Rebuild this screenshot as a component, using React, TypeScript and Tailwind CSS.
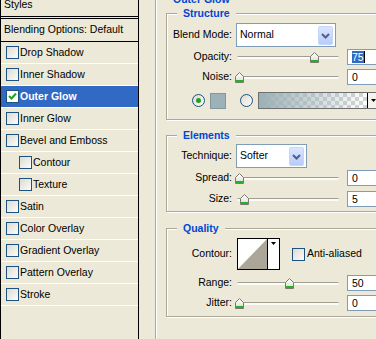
const LABEL = "w-[65px] shrink-0 text-right";

const styles = [
  { label: "Drop Shadow" },
  { label: "Inner Shadow" },
  { label: "Outer Glow", checked: true, selected: true },
  { label: "Inner Glow" },
  { label: "Bevel and Emboss" },
  { label: "Contour", indent: true },
  { label: "Texture", indent: true },
  { label: "Satin" },
  { label: "Color Overlay" },
  { label: "Gradient Overlay" },
  { label: "Pattern Overlay" },
  { label: "Stroke" },
];

function Check({ on = false, className = "" }: { on?: boolean; className?: string }) {
  return (
    <span
      className={`w-[13px] h-[13px] shrink-0 border border-[#1c5180] flex items-center justify-center ${
        on ? "bg-white" : "bg-[linear-gradient(135deg,#dcdad0,#fcfcfb)]"
      } ${className}`}
    >
      {on && (
        <svg width="9" height="9" viewBox="0 0 9 9">
          <path d="M1 4 L3.5 6.5 L8 1.5" fill="none" stroke="#21a121" strokeWidth="2" />
        </svg>
      )}
    </span>
  );
}

function Radio({ on = false }: { on?: boolean }) {
  return (
    <span className="w-[13px] h-[13px] shrink-0 rounded-full border border-[#1c5180] bg-[linear-gradient(135deg,#dcdad0,#fcfcfb)] flex items-center justify-center">
      {on && <span className="w-[5px] h-[5px] rounded-full bg-[#21a121]" />}
    </span>
  );
}

function Arrow() {
  return (
    <svg width="5" height="3" viewBox="0 0 5 3">
      <polygon points="0,0 5,0 2.5,3" fill="#000" />
    </svg>
  );
}

function Select({ value, width }: { value: string; width: string }) {
  return (
    <div className={`relative h-[24px] shrink-0 border border-[#7f9db9] bg-white flex items-center pl-[3px] ${width}`}>
      <span>{value}</span>
      <div className="absolute right-[2px] top-[2px] bottom-[1px] w-[15px] rounded-[2px] border border-[#c5d5fb] bg-[linear-gradient(#dbe5ff,#b8ccf9)] flex items-center justify-center">
        <svg width="9" height="6" viewBox="0 0 9 6">
          <path d="M1 1 L4.5 4.5 L8 1" fill="none" stroke="#4d6185" strokeWidth="2" />
        </svg>
      </div>
    </div>
  );
}

function Thumb({ x }: { x: number }) {
  return (
    <svg className="absolute top-[3px]" style={{ left: x }} width="9" height="11" viewBox="0 0 9 11">
      <defs>
        <linearGradient id="tg" x1="0" y1="0" x2="0" y2="1">
          <stop offset="0" stopColor="#ffffff" />
          <stop offset="1" stopColor="#dcdcd4" />
        </linearGradient>
      </defs>
      <path d="M4.5 0.5 L8.5 4.5 L8.5 10.5 L0.5 10.5 L0.5 4.5 Z" fill="url(#tg)" stroke="#7a7a72" />
      <rect x="1" y="8" width="7" height="2" fill="#25b025" />
    </svg>
  );
}

function SliderRow({
  label,
  v,
  className,
  children,
}: {
  label: string;
  v: number;
  className: string;
  children: React.ReactNode;
}) {
  return (
    <div className={`flex items-center h-[16px] ${className}`}>
      <div className={LABEL}>{label}</div>
      <div className="relative w-[115px] h-[16px] shrink-0">
        <div className="absolute left-[5px] top-[7px] w-[102px] h-[3px] rounded-full border-t border-[#a19e90] bg-[#fbfbf8]" />
        <Thumb x={3 + v} />
      </div>
      <div className="w-[40px] h-[16px] shrink-0 border border-[#7f9db9] bg-white pl-[4px] leading-[14px] flex items-center">
        {children}
      </div>
    </div>
  );
}

function Group({
  title,
  className,
  children,
}: {
  title: string;
  className: string;
  children: React.ReactNode;
}) {
  return (
    <div
      className={`relative w-[230px] flex flex-col border border-[#aca899] shadow-[inset_1px_1px_0_#fff,1px_1px_0_#fff] ${className}`}
    >
      <div className="absolute left-[10px] top-[-7px] px-[6px] bg-[#ece9d8] font-bold text-[#0046d5] leading-[13px]">
        {title}
      </div>
      {children}
    </div>
  );
}

export default function App() {
  return (
    <div className="w-[376px] h-[339px] overflow-hidden flex bg-[#ece9d8] text-black text-[10.5px] font-['Liberation_Sans',Arial,sans-serif]">
      {/* styles list */}
      <div className="w-[139px] h-full shrink-0 border-x border-black flex flex-col">
        <div className="h-[17px] shrink-0 border-b border-black pl-[3px]">
          <div className="mt-[-2px] leading-[13px]">Styles</div>
        </div>
        <div className="h-[1px] shrink-0" />
        <div className="h-[24px] shrink-0 border-y border-black pl-[3px] flex items-center">
          Blending Options: Default
        </div>
        {styles.map((s) => (
          <div
            key={s.label}
            className={`h-[22px] shrink-0 border-b border-white flex items-center ${
              s.indent ? "pl-[18px]" : "pl-[5px]"
            } ${s.selected ? "bg-[#316ac5] text-white font-bold" : ""}`}
          >
            <Check on={s.checked} />
            <span className="ml-[1px]">{s.label}</span>
          </div>
        ))}
      </div>

      {/* options */}
      <div className="relative ml-[16px] mt-[-2px] w-[260px] h-[360px] shrink-0 border border-[#aca899] shadow-[inset_1px_1px_0_#fff,1px_1px_0_#fff] pl-[10px] pt-[14px]">
        <div className="absolute left-[12px] top-[-6px] px-[5px] bg-[#ece9d8] font-bold text-[#0046d5] leading-[13px]">
          Outer Glow
        </div>

        <Group title="Structure" className="h-[107px]">
          <div className="flex items-center mt-[9px]">
            <div className={LABEL}>Blend Mode:</div>
            <div className="ml-[4px]">
              <Select value="Normal" width="w-[100px]" />
            </div>
          </div>
          <SliderRow label="Opacity:" v={75} className="mt-[2px]">
            <span className="inline-block h-[12px] leading-[12px] bg-[#316ac5] text-white">75</span>
            <span className="inline-block w-[1px] h-[12px] bg-black" />
          </SliderRow>
          <SliderRow label="Noise:" v={0} className="mt-[4px]">
            0
          </SliderRow>
          <div className="flex items-center h-[17px] mt-[7px] pl-[25px]">
            <Radio on />
            <div className="ml-[5px] w-[16px] h-[16px] shrink-0 border border-[#83979b] bg-[#9db2b6]" />
            <div className="ml-[14px]">
              <Radio />
            </div>
            <div className="ml-[5px] flex h-[17px] w-[130px] shrink-0 border border-[#6f6f6f]">
              <div className="w-[108px] h-full bg-[image:linear-gradient(to_right,#9bb1b5,rgba(155,177,181,0)),repeating-conic-gradient(#d4d4d4_0_25%,#fff_0_50%)] bg-[length:100%_100%,8px_8px]" />
              <div className="w-[12px] h-full border-l border-black bg-[#f4f3ee] flex items-center justify-center">
                <Arrow />
              </div>
            </div>
          </div>
        </Group>

        <Group title="Elements" className="h-[77px] mt-[15px]">
          <div className="flex items-center mt-[8px]">
            <div className={LABEL}>Technique:</div>
            <div className="ml-[4px]">
              <Select value="Softer" width="w-[71px]" />
            </div>
          </div>
          <SliderRow label="Spread:" v={0} className="mt-[2px]">
            0
          </SliderRow>
          <SliderRow label="Size:" v={5} className="mt-[5px]">
            5
          </SliderRow>
        </Group>

        <Group title="Quality" className="h-[89px] mt-[16px]">
          <div className="flex items-center h-[32px] mt-[9px]">
            <div className={LABEL}>Contour:</div>
            <div className="ml-[5px] flex w-[43px] h-[32px] shrink-0 border border-black bg-white">
              <div className="w-[30px] h-full border-r border-black">
                <svg width="29" height="30" viewBox="0 0 29 30">
                  <polygon points="0,30 29,0 29,30" fill="#aaa698" />
                </svg>
              </div>
              <div className="flex-1 flex justify-center pt-[3px]">
                <Arrow />
              </div>
            </div>
            <Check className="ml-[12px]" />
            <span className="ml-[2px]">Anti-aliased</span>
          </div>
          <SliderRow label="Range:" v={50} className="mt-[5px]">
            50
          </SliderRow>
          <SliderRow label="Jitter:" v={0} className="mt-[4px]">
            0
          </SliderRow>
        </Group>
      </div>
    </div>
  );
}
